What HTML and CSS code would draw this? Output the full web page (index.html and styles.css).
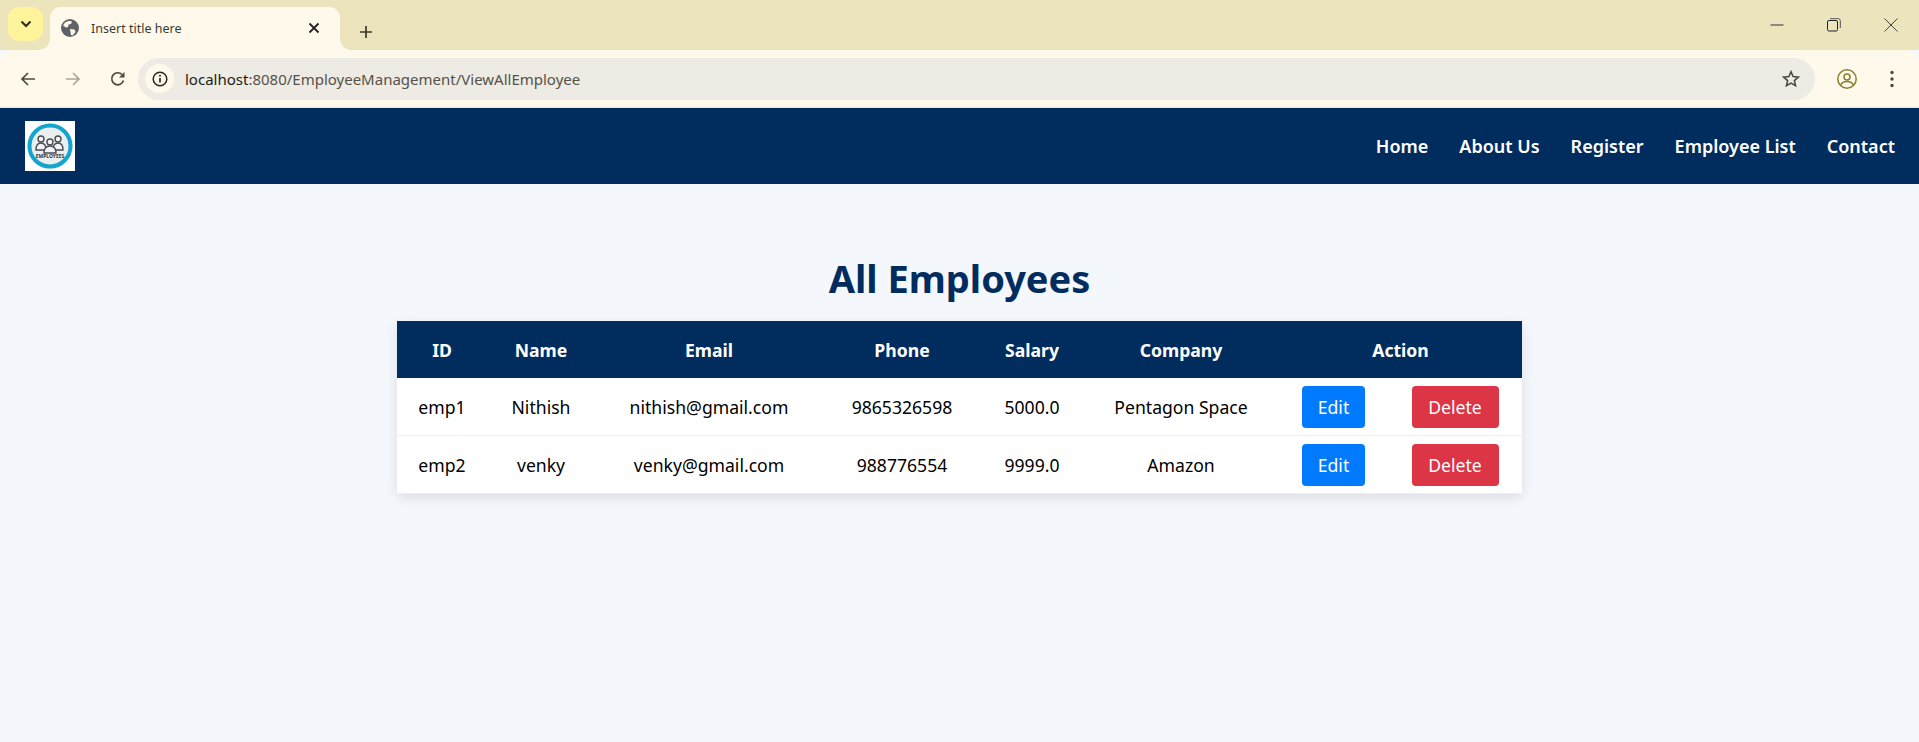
FILE: index.html
```html
<!DOCTYPE html>
<html>
<head>
    <meta charset="utf-8">
    <title>Insert title here</title>
    <link rel="stylesheet" href="styles.css">
</head>
<body>

<!-- browser frame -->
<div class="tabstrip">
    <div class="tabsearch">
        <svg width="12" height="8" viewBox="0 0 12 8"><path d="M1.5 1.5 6 6l4.5-4.5" fill="none" stroke="#2b2a1c" stroke-width="2"/></svg>
    </div>
    <div class="tab">
        <svg class="favicon" width="18" height="18" viewBox="0 0 18 18">
            <circle cx="9" cy="9" r="9" fill="#5f6368"/>
            <path d="M4 3.5c2-1.5 5-2 7-1l-1 2.500-2.500.5-.5 2.500-2 .5-3-2zM9 10l4.500.5 1 2.500-3 3.500-1.500-.5-.5-3z" fill="#fff9ec"/>
        </svg>
        <span class="tabtitle">Insert title here</span>
        <svg class="tabclose" width="12" height="12" viewBox="0 0 12 12"><path d="M1.500 1.500l9 9m0-9l-9 9" stroke="#222" stroke-width="1.800"/></svg>
    </div>
    <svg class="newtab" width="14" height="14" viewBox="0 0 14 14"><path d="M7 1v12M1 7h12" stroke="#3c3a26" stroke-width="1.700"/></svg>
    <div class="winbtns">
        <svg width="14" height="14" viewBox="0 0 14 14"><path d="M.5 7h13" stroke="#333" stroke-width="1"/></svg>
        <svg width="14" height="14" viewBox="0 0 14 14"><rect x=".5" y="2.500" width="10" height="10.500" rx="1.500" fill="none" stroke="#222"/><path d="M3 .7h8.300a2 2 0 0 1 2 2V10" fill="none" stroke="#555"/></svg>
        <svg width="14" height="14" viewBox="0 0 14 14"><path d="M.5.500l13 13m0-13l-13 13" stroke="#444" stroke-width="1"/></svg>
    </div>
</div>

<div class="toolbar">
    <svg class="tool" width="16" height="16" viewBox="0 0 16 16"><path d="M15 8H2M8 2 2 8l6 6" fill="none" stroke="#4f4a38" stroke-width="1.700"/></svg>
    <svg class="tool" width="16" height="16" viewBox="0 0 16 16"><path d="M1 8h13M8 2l6 6-6 6" fill="none" stroke="#a9a695" stroke-width="1.700"/></svg>
    <svg class="tool" width="16" height="16" viewBox="0 0 16 16"><path d="M13.500 9.500A6 6 0 1 1 12 3.500" fill="none" stroke="#4f4a38" stroke-width="1.700"/><path d="M14.500 1v5.500H9z" fill="#4f4a38"/></svg>
    <div class="omnibox">
        <div class="siteinfo">
            <svg width="16" height="16" viewBox="0 0 16 16"><circle cx="8" cy="8" r="6.800" fill="none" stroke="#2b2a20" stroke-width="1.500"/><path d="M8 7v4.500" stroke="#2b2a20" stroke-width="1.700"/><circle cx="8" cy="4.800" r="1" fill="#2b2a20"/></svg>
        </div>
        <div class="url"><span class="host">localhost</span>:8080/EmployeeManagement/ViewAllEmployee</div>
        <svg class="star" width="18" height="18" viewBox="0 0 18 18"><path d="M9 1.800l2.100 4.800 5.200.5-3.900 3.500 1.100 5.100L9 13.100l-4.500 2.600 1.100-5.100L1.700 7.100l5.200-.5z" fill="none" stroke="#4a4a44" stroke-width="1.600"/></svg>
    </div>
    <svg class="profile" width="20" height="20" viewBox="0 0 20 20">
        <circle cx="10" cy="10" r="9.200" fill="none" stroke="#8a7d2e" stroke-width="1.500"/>
        <circle cx="10" cy="8" r="3" fill="none" stroke="#8a7d2e" stroke-width="1.500"/>
        <path d="M3.800 16c1-2.800 3.500-3.600 6.200-3.600s5.200.8 6.200 3.600" fill="none" stroke="#8a7d2e" stroke-width="1.500"/>
    </svg>
    <svg class="dots" width="4" height="18" viewBox="0 0 4 18"><circle cx="2" cy="2.500" r="1.700" fill="#4f4a38"/><circle cx="2" cy="9" r="1.700" fill="#4f4a38"/><circle cx="2" cy="15.500" r="1.700" fill="#4f4a38"/></svg>
</div>

<!-- page -->
<nav class="navbar">
    <div class="logo">
        <svg width="50" height="50" viewBox="0 0 50 50">
            <circle cx="25" cy="25" r="23" fill="#eceff0"/>
            <circle cx="25" cy="25" r="20.500" fill="none" stroke="#12a5cf" stroke-width="4"/>
            <g fill="#f4f4f4" stroke="#4a4d55" stroke-width="1.400">
                <circle cx="16" cy="18" r="3"/>
                <path d="M11 29c0-5 2-7 5-7s5 2 5 7z"/>
                <circle cx="33" cy="18" r="3"/>
                <path d="M28 29c0-5 2-7 5-7s5 2 5 7z"/>
                <circle cx="25" cy="21" r="3"/>
                <path d="M19 32c0-5 2-7 6-7s6 2 6 7z"/>
            </g>
            <text class="logotext" x="25" y="37" text-anchor="middle">EMPLOYEES</text>
        </svg>
    </div>
    <ul class="navlinks">
        <li><a href="#">Home</a></li>
        <li><a href="#">About Us</a></li>
        <li><a href="#">Register</a></li>
        <li><a href="#">Employee List</a></li>
        <li><a href="#">Contact</a></li>
    </ul>
</nav>

<main class="content">
    <h1>All Employees</h1>
    <table class="emptable">
        <colgroup>
            <col class="c-id"><col class="c-name"><col class="c-email"><col class="c-phone">
            <col class="c-salary"><col class="c-company"><col class="c-edit"><col class="c-delete">
        </colgroup>
        <thead>
            <tr>
                <th>ID</th><th>Name</th><th>Email</th><th>Phone</th><th>Salary</th><th>Company</th>
                <th colspan="2">Action</th>
            </tr>
        </thead>
        <tbody>
            <tr>
                <td>emp1</td><td>Nithish</td><td>nithish@gmail.com</td><td>9865326598</td><td>5000.0</td><td>Pentagon Space</td>
                <td><a class="btn edit" href="#">Edit</a></td>
                <td><a class="btn delete" href="#">Delete</a></td>
            </tr>
            <tr>
                <td>emp2</td><td>venky</td><td>venky@gmail.com</td><td>988776554</td><td>9999.0</td><td>Amazon</td>
                <td><a class="btn edit" href="#">Edit</a></td>
                <td><a class="btn delete" href="#">Delete</a></td>
            </tr>
        </tbody>
    </table>
</main>

</body>
</html>
```

FILE: styles.css
```css
html, body {
    margin: 0;
    height: 100%;
    overflow: hidden;
}
body {
    background-color: #f4f7fb;
    font-family: "Noto Sans", "Open Sans", sans-serif;
    color: #000;
}

/* browser frame */
.tabstrip {
    display: flex;
    align-items: flex-end;
    height: 50px;
    background-color: #ebe4bd;
}
.tabsearch {
    display: flex;
    align-items: center;
    justify-content: center;
    width: 35px;
    height: 34px;
    margin: 0 7px 9px 8px;
    border-radius: 11px;
    background-color: #fff39c;
}
.tab {
    position: relative;
    display: flex;
    align-items: center;
    width: 290px;
    height: 43px;
    padding: 0 20px 1px 11px;
    box-sizing: border-box;
    border-radius: 11px 11px 0 0;
    background-color: #fff9ec;
}
.tab::before,
.tab::after {
    content: "";
    position: absolute;
    bottom: 0;
    width: 11px;
    height: 11px;
}
.tab::before {
    left: -11px;
    background: radial-gradient(circle at 0 0, #ebe4bd 10.500px, #fff9ec 11px);
}
.tab::after {
    right: -11px;
    background: radial-gradient(circle at 100% 0, #ebe4bd 10.500px, #fff9ec 11px);
}
.favicon {
    flex: none;
}
.tabtitle {
    flex: 1;
    margin-left: 12px;
    font-size: 12.500px;
    color: #3c3b33;
}
.newtab {
    margin: 0 0 11px 19px;
    flex: none;
}
.winbtns {
    display: flex;
    gap: 43px;
    margin: 0 21px 18px auto;
}
.toolbar {
    display: flex;
    align-items: center;
    height: 57px;
    background-color: #fff9ec;
    border-bottom: 1px solid #efe8d6;
    border-radius: 13px 13px 0 0;
    margin-top: 0;
    position: relative;
}
.tool {
    flex: none;
    margin-left: 20px;
    margin-right: 9px;
}
.tool:first-child {
    margin-left: 20px;
}
.omnibox {
    display: flex;
    align-items: center;
    flex: 1;
    height: 42px;
    margin-left: 3px;
    padding: 0 15px 0 7px;
    border-radius: 21px;
    background-color: #eeeae4;
}
.siteinfo {
    display: flex;
    align-items: center;
    justify-content: center;
    width: 29px;
    height: 29px;
    border-radius: 50%;
    background-color: #fff9ec;
}
.url {
    flex: 1;
    margin-left: 11px;
    font-size: 15px;
    color: #555249;
}
.host {
    color: #1d1c16;
}
.star {
    flex: none;
}
.profile {
    flex: none;
    margin-left: 22px;
}
.dots {
    flex: none;
    margin: 0 25px 0 33px;
}

/* navbar */
.navbar {
    display: flex;
    align-items: center;
    justify-content: space-between;
    height: 76px;
    padding: 0 24px 0 25px;
    background-color: #012c5e;
}
.logo {
    width: 50px;
    height: 50px;
    background-color: #fff;
}
.logotext {
    font-size: 5px;
    font-weight: 700;
    fill: #33353c;
}
.navlinks {
    display: flex;
    gap: 31px;
    margin: 0;
    padding: 0;
    list-style: none;
}
.navlinks a {
    color: #fff;
    font-size: 18px;
    font-weight: 600;
    text-decoration: none;
}

/* table */
.content {
    padding-top: 70px;
}
.content h1 {
    margin: 0 0 19px;
    color: #012c5e;
    font-size: 38px;
    line-height: 48px;
    font-weight: 700;
    text-align: center;
}
.emptable {
    width: 1125px;
    margin: 0 auto;
    table-layout: fixed;
    border-collapse: collapse;
    background-color: #fff;
    box-shadow: 0 4px 12px rgba(0, 0, 0, 0.1);
    font-size: 17.600px;
}
.c-id { width: 90px; }
.c-name { width: 108px; }
.c-email { width: 228px; }
.c-phone { width: 158px; }
.c-salary { width: 102px; }
.c-company { width: 196px; }
.c-edit { width: 109px; }
.c-delete { width: 134px; }
.emptable th {
    height: 57px;
    padding: 0;
    background-color: #012c5e;
    color: #fff;
    font-weight: 700;
    text-align: center;
}
.emptable td {
    height: 57px;
    padding: 0;
    border-bottom: 1px solid #eeeeee;
    text-align: center;
}
.btn {
    display: inline-block;
    height: 42px;
    line-height: 42px;
    border-radius: 4px;
    color: #fff;
    text-decoration: none;
    vertical-align: middle;
}
.edit {
    width: 63px;
    background-color: #007bff;
}
.delete {
    width: 87px;
    background-color: #dc3545;
}
```
